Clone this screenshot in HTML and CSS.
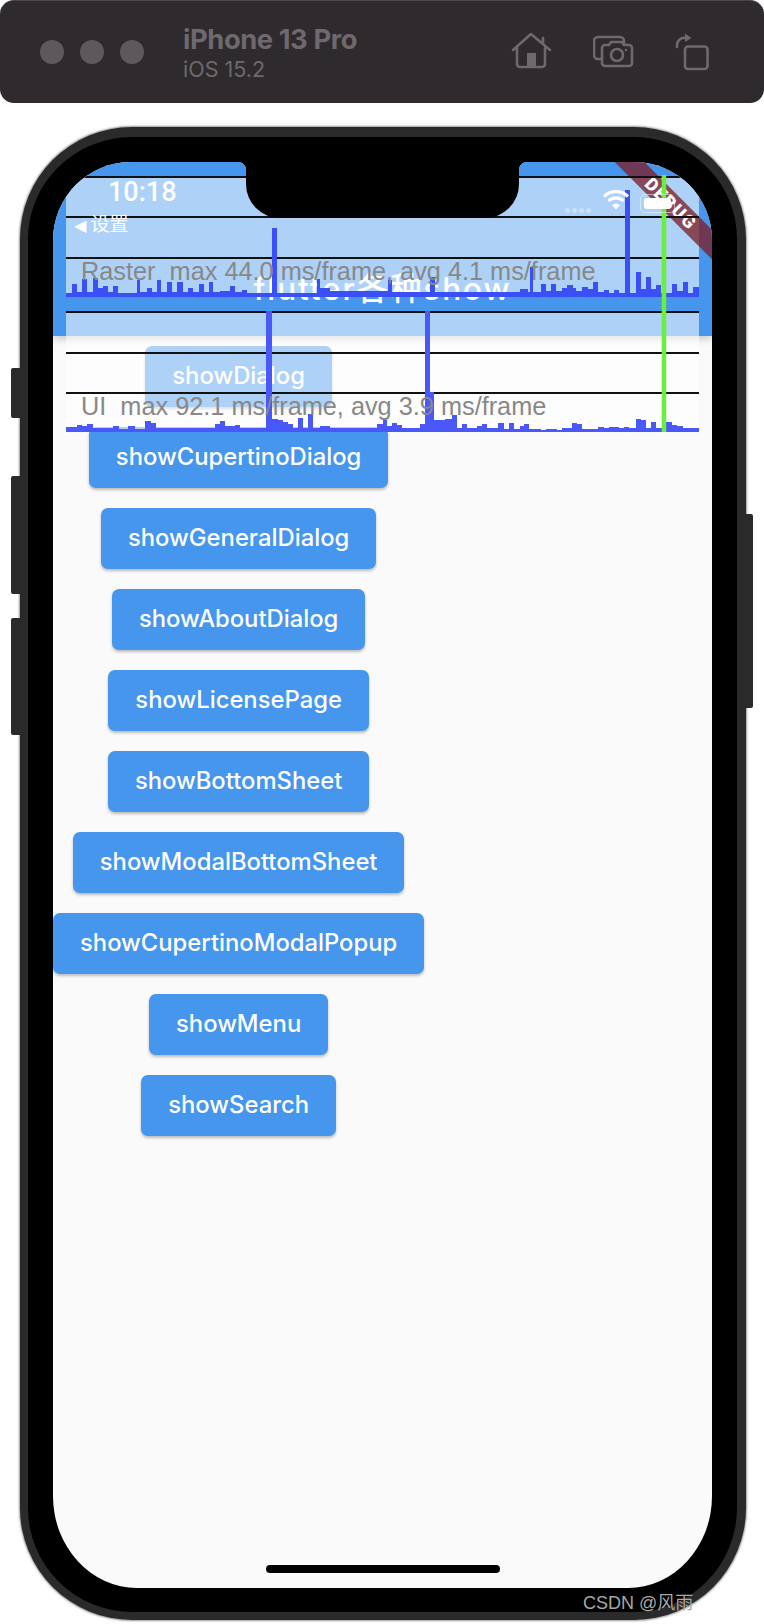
FILE: index.html
```html
<!DOCTYPE html>
<html lang="zh-CN">
<head>
    <meta charset="UTF-8">
    <meta name="viewport" content="width=device-width, initial-scale=1.0">
    <title>flutter各种show</title>
    <link rel="stylesheet" href="styles.css">
</head>
<body>
    <!-- Simulator title bar -->
    <header class="sim-bar">
        <div class="sim-dots">
            <span class="sim-dot"></span>
            <span class="sim-dot"></span>
            <span class="sim-dot"></span>
        </div>
        <div class="sim-title">
            <div class="sim-name">iPhone 13 Pro</div>
            <div class="sim-os">iOS 15.2</div>
        </div>
        <div class="sim-icons">
            <svg class="sim-icon" width="42" height="40" viewBox="0 0 42 40">
                <path d="M2 18L20 2L39 18M6 16V32a3 3 0 0 0 3 3H31a3 3 0 0 0 3-3V16M32 6V12"/>
                <rect class="sim-fill" x="16" y="21" width="9" height="14"/>
            </svg>
            <svg class="sim-icon" width="42" height="40" viewBox="0 0 42 40">
                <path d="M9 27H5a4 4 0 0 1-4-4V9a4 4 0 0 1 4-4H27a4 4 0 0 1 4 4v3"/>
                <path d="M12 13H16l2-3H29l2 3H36a3 3 0 0 1 3 3V31a3 3 0 0 1-3 3H12a3 3 0 0 1-3-3V16a3 3 0 0 1 3-3z"/>
                <circle cx="24" cy="23" r="6"/>
                <circle class="sim-fill" cx="33" cy="18" r="1.3"/>
            </svg>
            <svg class="sim-icon" width="36" height="40" viewBox="0 0 36 40">
                <rect x="10" y="14.5" width="22.5" height="22.5" rx="3"/>
                <path d="M2 15V13a7 7 0 0 1 8-7"/>
                <path class="sim-fill" d="M10 1.5L16.5 6L10 10z"/>
            </svg>
        </div>
    </header>

    <!-- Phone -->
    <div class="phone">
        <span class="side-btn side-mute"></span>
        <span class="side-btn side-up"></span>
        <span class="side-btn side-down"></span>
        <span class="side-btn side-power"></span>

        <div class="screen">
            <div class="app-bar">
                <h1 class="app-title">flutter各种show</h1>
            </div>

            <div class="btn-list">
                <button class="btn">showDialog</button>
                <button class="btn">showCupertinoDialog</button>
                <button class="btn">showGeneralDialog</button>
                <button class="btn">showAboutDialog</button>
                <button class="btn">showLicensePage</button>
                <button class="btn">showBottomSheet</button>
                <button class="btn">showModalBottomSheet</button>
                <button class="btn">showCupertinoModalPopup</button>
                <button class="btn">showMenu</button>
                <button class="btn">showSearch</button>
            </div>

            <!-- Performance overlay -->
            <div class="perf">
                <div class="perf-graph"></div>
                <div class="perf-graph"></div>
                <span class="perf-label perf-label-raster">Raster&nbsp; max 44.0 ms/frame, avg 4.1 ms/frame</span>
                <span class="perf-label perf-label-ui">UI&nbsp; max 92.1 ms/frame, avg 3.9 ms/frame</span>
            </div>

            <div class="debug-banner">DEBUG</div>

            <svg class="perf-bars" viewBox="66 174 633 258">
                <path class="perf-lines" d="M66 176H699M66 216H699M66 257H699M66 311H699M66 352H699M66 392H699"/>
                <!-- raster frames -->
                <path class="bars-raster" d="M66 296V292H72V283H77V291H82V278H87V291H93V277H98V287H103V285H108V291H113V285H118V292H137V279H140V291H147V287H152V291H157V279H161V291H167V281H172V291H177V281H183V291H188V287H193V291H199V283H204V291H209V281H213V291H220V290H230V285H235V291H242V289H247V292H317V278H320V287H330V290H388V279H392V291H430V276H435V291H520V288H528V291H530V266H533V291H541V283H546V290H551V283H556V290H562V287H567V284H573V287H576V290H582V286H588V288H593V281H598V291H604V289H609V292H614V289H619V292H625V189H630V292H636V271H641V288H646V276H651V288H656V284H661V292H672V283H677V290H683V281H688V292H693V286H699V296Z"/>
                <path class="bars-raster" d="M272 296V227H277V296Z"/>
                <!-- ui frames -->
                <path class="bars-ui" d="M66 431V426H77V424H82V425H87V423H93V427H113V425H119V428H128V425H135V428H145V420H151V422H156V427H215V423H220V420H225V425H235V424H240V427H266V310H272V418H278V419H283V421H288V423H293V427H298V417H303V427H308V413H313V427H320V425H330V427H377V423H383V417H387V425H392V422H397V424H402V427H420V423H425V310H430V391H434V419H445V418H452V414H457V427H462V423H467V427H477V425H482V423H487V427H498V422H504V428H509V422H514V428H520V425H524V423H529V428H541V429H546V428H557V429H562V427H572V422H577V423H582V428H598V426H604V427H609V426H619V427H624V426H629V427H636V418H641V419H646V427H651V421H656V427H666V421H672V424H677V425H683V427H699V431Z"/>
                <rect class="bars-green" x="661.7" y="174" width="4.5" height="257"/>
            </svg>

            <!-- iOS status bar -->
            <div class="status-time">10:18</div>
            <div class="status-back"><span class="status-arrow">◀</span> 设置</div>
            <div class="status-signal">
                <span></span><span></span><span></span><span></span>
            </div>
            <svg class="status-wifi" width="28" height="22" viewBox="0 0 28 22">
                <path d="M2 8.5A17 17 0 0 1 26 8.5M6.5 13A10.5 10.5 0 0 1 21.5 13" fill="none" stroke="#fff" stroke-width="3.2"/>
                <path d="M10 17.2A5.5 5.5 0 0 1 18 17.2L14 21.5Z" fill="#fff"/>
            </svg>
            <div class="status-battery"><span class="status-level"></span></div>

            <div class="notch"></div>
            <div class="home-bar"></div>
        </div>
    </div>

    <div class="watermark">CSDN @风雨</div>
</body>
</html>
```

FILE: styles.css
```css
/* General Styles */
body {
    margin: 0;
    background-color: #fff;
    font-family: "Inter", "Noto Sans CJK SC", sans-serif;
    position: relative;
    height: 1624px;
    overflow: hidden;
}

/* Simulator bar */
.sim-bar {
    display: flex;
    align-items: center;
    height: 103px;
    padding: 0 53px 0 40px;
    box-sizing: border-box;
    background-color: #2e2a2e;
    border-radius: 14px;
    border-top: 1px solid #4a474a;
}

.sim-dots {
    display: flex;
    gap: 16px;
}

.sim-dot {
    width: 24px;
    height: 24px;
    border-radius: 50%;
    background-color: #5c585c;
}

.sim-title {
    margin-left: 39px;
    padding-top: 1px;
    color: #6d696d;
}

.sim-name {
    font-size: 27.3px;
    font-weight: 700;
    line-height: 32px;
    letter-spacing: -0.4px;
}

.sim-os {
    font-size: 21.5px;
    line-height: 26px;
}

.sim-icons {
    display: flex;
    gap: 40px;
    margin-left: auto;
}

.sim-icon {
    fill: none;
    stroke: #6d696d;
    stroke-width: 2.6;
    stroke-linecap: round;
    stroke-linejoin: round;
}

.sim-icon .sim-fill {
    fill: #6d696d;
    stroke: none;
}

/* Phone */
.phone {
    position: relative;
    width: 726px;
    height: 1493px;
    margin: 24px 0 0 20px;
    padding: 25px;
    box-sizing: border-box;
    background-color: #000;
    border-style: solid;
    border-color: #2a2a2a;
    border-width: 10px 9px 8px 8px;
    border-radius: 112px;
    box-shadow: 0 0 2px 1px #999;
}

.side-btn {
    position: absolute;
    width: 9px;
    left: -17px;
    background-color: #2a2a2a;
    border-radius: 2px 0 0 2px;
}

.side-mute {
    top: 231px;
    height: 50px;
}

.side-up {
    top: 339px;
    height: 118px;
}

.side-down {
    top: 481px;
    height: 117px;
}

.side-power {
    left: auto;
    right: -16px;
    top: 377px;
    height: 194px;
    width: 7px;
    border-radius: 0 2px 2px 0;
}

.screen {
    position: relative;
    width: 659px;
    height: 1426px;
    overflow: hidden;
    background-color: #fafafa;
    border-radius: 78px 78px 84px 84px / 78px 78px 92px 92px;
}

/* App bar */
.app-bar {
    display: flex;
    justify-content: center;
    align-items: flex-end;
    height: 174px;
    box-sizing: border-box;
    padding-bottom: 29px;
    background-color: #4596ec;
    box-shadow: 0 3px 8px rgba(0, 0, 0, 0.2);
}

.app-title {
    margin: 0;
    color: #fff;
    font-size: 31.5px;
    font-weight: 500;
    line-height: 36px;
    letter-spacing: 1.9px;
}

/* Buttons */
.btn-list {
    display: flex;
    flex-direction: column;
    align-items: center;
    gap: 20px;
    width: fit-content;
    margin-top: 10px;
}

.btn {
    height: 61px;
    padding: 0 27px 2px;
    border: none;
    border-radius: 7px;
    background-color: #4596ec;
    color: #fff;
    font-family: "Inter", sans-serif;
    font-size: 23.8px;
    font-weight: 500;
    box-shadow: 0 2px 3px rgba(0, 0, 0, 0.25);
}

/* Performance overlay */
.perf {
    position: absolute;
    top: 14px;
    left: 13px;
    display: flex;
    flex-direction: column;
    gap: 14px;
    width: 633px;
}

.perf-graph {
    height: 121px;
    background-color: rgba(255, 255, 255, 0.56);
}

.perf-label {
    position: absolute;
    left: 15px;
    z-index: 4;
    color: #888;
    font-family: "Liberation Sans", sans-serif;
    font-size: 25.3px;
    line-height: 28px;
    white-space: nowrap;
}

.perf-label-raster {
    top: 81px;
}

.perf-label-ui {
    top: 216px;
}

.perf-bars {
    position: absolute;
    top: 13px;
    left: 13px;
    width: 633px;
    height: 258px;
    z-index: 3;
}

.perf-lines {
    fill: none;
    stroke: #111;
    stroke-width: 2;
}

.bars-raster {
    fill: #3a50f6;
}

.bars-ui {
    fill: #4a58fa;
}

.bars-green {
    fill: #69f03a;
}

/* Debug banner */
.debug-banner {
    position: absolute;
    top: 31px;
    left: 498px;
    width: 240px;
    height: 21px;
    z-index: 2;
    transform: rotate(45deg);
    background-color: rgba(125, 25, 35, 0.75);
    color: #fff;
    font-family: "Roboto", sans-serif;
    font-size: 18px;
    font-weight: 900;
    line-height: 21px;
    letter-spacing: 1.5px;
    text-align: center;
}

/* Status bar */
.status-time,
.status-back,
.status-signal,
.status-wifi,
.status-battery {
    position: absolute;
    z-index: 5;
}

.status-time {
    top: 14px;
    left: 55px;
    color: #fff;
    font-family: "Roboto", sans-serif;
    font-size: 27px;
    font-weight: 500;
    line-height: 32px;
}

.status-back {
    top: 49px;
    left: 21px;
    color: #fff;
    font-family: "Noto Sans CJK SC", sans-serif;
    font-size: 19px;
    line-height: 24px;
}

.status-arrow {
    font-family: "DejaVu Sans", sans-serif;
    font-size: 16px;
}

.status-signal {
    display: flex;
    gap: 2px;
    top: 46px;
    left: 512px;
}

.status-signal span {
    width: 5px;
    height: 5px;
    border-radius: 50%;
    background-color: rgba(255, 255, 255, 0.35);
}

.status-wifi {
    top: 26px;
    left: 549px;
}

.status-battery {
    top: 32px;
    left: 587px;
    width: 35px;
    height: 19px;
    box-sizing: border-box;
    padding: 3px;
    border: 1px solid rgba(255, 255, 255, 0.5);
    border-radius: 5px;
}

.status-level {
    display: block;
    height: 100%;
    background-color: #fff;
    border-radius: 3px;
}

/* Notch and home indicator */
.notch {
    position: absolute;
    top: 0;
    left: 193px;
    width: 273px;
    height: 56px;
    z-index: 6;
    background-color: #000;
    border-radius: 0 0 34px 34px;
}

.notch::before,
.notch::after {
    content: "";
    position: absolute;
    top: 0;
    width: 8px;
    height: 8px;
}

.notch::before {
    left: -8px;
    background: radial-gradient(circle at 0 100%, transparent 8px, #000 8.5px);
}

.notch::after {
    right: -8px;
    background: radial-gradient(circle at 100% 100%, transparent 8px, #000 8.5px);
}

.home-bar {
    position: absolute;
    left: 213px;
    bottom: 15px;
    width: 234px;
    height: 8px;
    border-radius: 4px;
    background-color: #000;
}

.watermark {
    position: absolute;
    top: 1591px;
    left: 583px;
    color: #a8a8a8;
    font-family: "Liberation Sans", "Noto Sans CJK SC", sans-serif;
    font-size: 18px;
    line-height: 24px;
}
```
